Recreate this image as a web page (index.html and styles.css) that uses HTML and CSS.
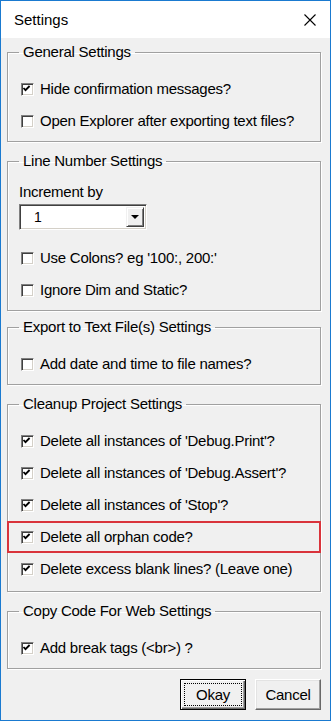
FILE: index.html
```html
<!DOCTYPE html>
<html lang="en">
<head>
  <meta charset="UTF-8">
  <title>Settings</title>
  <link rel="stylesheet" href="styles.css">
</head>
<body>

  <div class="window">
    <div class="titlebar">
      <span class="title">Settings</span>
      <svg class="close" width="12" height="12" viewBox="0 0 12 12">
        <path d="M0.5 0.5 L11.5 11.5 M11.5 0.5 L0.5 11.5" stroke="#000" stroke-width="1.1" fill="none"/>
      </svg>
    </div>

    <div class="content">
      <fieldset class="group">
        <legend>General Settings</legend>
        <div class="check"><span class="box on"></span>Hide confirmation messages?</div>
        <div class="check"><span class="box"></span>Open Explorer after exporting text files?</div>
      </fieldset>

      <fieldset class="group">
        <legend>Line Number Settings</legend>
        <div class="label">Increment by</div>
        <div class="combo">
          <span class="combo-value">1</span>
          <span class="combo-arrow"></span>
        </div>
        <div class="check"><span class="box"></span>Use Colons? eg '100:, 200:'</div>
        <div class="check"><span class="box"></span>Ignore Dim and Static?</div>
      </fieldset>

      <fieldset class="group tight">
        <legend>Export to Text File(s) Settings</legend>
        <div class="check"><span class="box"></span>Add date and time to file names?</div>
      </fieldset>

      <fieldset class="group roomy">
        <legend>Cleanup Project Settings</legend>
        <div class="check"><span class="box on"></span>Delete all instances of 'Debug.Print'?</div>
        <div class="check"><span class="box on"></span>Delete all instances of 'Debug.Assert'?</div>
        <div class="check"><span class="box on"></span>Delete all instances of 'Stop'?</div>
        <div class="check highlight"><span class="box on"></span>Delete all orphan code?</div>
        <div class="check"><span class="box on"></span>Delete excess blank lines? (Leave one)</div>
      </fieldset>

      <fieldset class="group">
        <legend>Copy Code For Web Settings</legend>
        <div class="check"><span class="box on"></span>Add break tags (&lt;br&gt;) ?</div>
      </fieldset>

      <div class="buttons">
        <button class="btn default"><span class="focus">Okay</span></button>
        <button class="btn">Cancel</button>
      </div>
    </div>
  </div>

</body>
</html>
```

FILE: styles.css
```css
html, body {
  margin: 0;
  padding: 0;
}
body {
  font-family: "Liberation Sans", Arial, sans-serif;
  font-size: 15px;
  letter-spacing: -0.25px;
  color: #000;
  background-color: #f0f0f0;
}
.window {
  width: 331px;
  height: 721px;
  box-sizing: border-box;
  border: 1px solid #1a7ad0;
  background-color: #f0f0f0;
}
.titlebar {
  height: 37px;
  background-color: #fff;
  display: flex;
  align-items: center;
  justify-content: space-between;
  padding: 0 14px 0 13px;
}
.title {
  font-size: 15px;
  letter-spacing: 0;
}
.content {
  padding: 5px 9px 0 6px;
}
.group {
  margin: 10px 0 0;
  padding: 12px 0 4px 13px;
  border: 1px solid #a0a0a0;
  box-shadow: 1px 1px 0 #fff, inset 1px 1px 0 #fff;
  min-width: 0;
}
.group:first-child {
  margin-top: 0;
}
.group.tight {
  margin-top: 7px;
}
.group.roomy {
  padding-bottom: 6px;
}
.group legend {
  padding: 0 4px;
  margin-left: -2px;
  line-height: 18px;
}
.check {
  display: flex;
  align-items: center;
  height: 32px;
  line-height: 18px;
}
.box {
  width: 13px;
  height: 13px;
  box-sizing: border-box;
  margin-right: 6px;
  background-color: #fff;
  border: 1px solid;
  border-color: #808080 #fff #fff #808080;
  box-shadow: inset 1px 1px 0 #404040, inset -1px -1px 0 #d4d0c8;
  flex: none;
}
.box.on {
  background-image: url("data:image/svg+xml,%3Csvg xmlns='http://www.w3.org/2000/svg' width='11' height='11' viewBox='0 0 11 11'%3E%3Cpath d='M2.5 5 L4.5 7.2 L8.6 3' stroke='%23000' stroke-width='1.8' fill='none'/%3E%3C/svg%3E");
  background-position: -1px -1px;
  background-repeat: no-repeat;
}
.highlight {
  margin: 0 -1px 0 -14px;
  padding-left: 12px;
  border: 2px solid #d9333b;
  box-sizing: border-box;
}
.label {
  margin: 1px 0 0 -2px;
  line-height: 18px;
}
.combo {
  margin: 3px 0 12px -2px;
  width: 128px;
  height: 26px;
  box-sizing: border-box;
  background-color: #fff;
  border: 1px solid;
  border-color: #808080 #fff #fff #808080;
  box-shadow: inset 1px 1px 0 #404040, inset -1px -1px 0 #d4d0c8;
  display: flex;
  align-items: center;
  justify-content: space-between;
  padding: 2px;
}
.combo-value {
  padding-left: 12px;
  font-size: 14px;
}
.combo-arrow {
  width: 18px;
  height: 20px;
  box-sizing: border-box;
  background-color: #f0f0f0;
  border: 1px solid;
  border-color: #f0f0f0 #404040 #404040 #f0f0f0;
  box-shadow: inset 1px 1px 0 #fff, inset -1px -1px 0 #808080;
  position: relative;
}
.combo-arrow::after {
  content: "";
  position: absolute;
  left: 4px;
  top: 7px;
  border-left: 4px solid transparent;
  border-right: 4px solid transparent;
  border-top: 4px solid #000;
}
.buttons {
  display: flex;
  justify-content: flex-end;
  gap: 9px;
  margin-top: 10px;
}
.btn {
  width: 66px;
  height: 31px;
  box-sizing: border-box;
  font-family: "Liberation Sans", Arial, sans-serif;
  font-size: 15px;
  letter-spacing: -0.25px;
  color: #000;
  background-color: #f0f0f0;
  border: 1px solid;
  border-color: #fff #696969 #696969 #fff;
  box-shadow: inset -1px -1px 0 #a0a0a0, inset 1px 1px 0 #e3e3e3;
  padding: 0;
}
.btn.default {
  border: 1px solid #000;
  box-shadow: inset 1px 1px 0 #fff, inset -1px -1px 0 #696969, inset -2px -2px 0 #a0a0a0;
  padding: 3px;
  display: flex;
}
.focus {
  flex: 1;
  display: flex;
  align-items: center;
  justify-content: center;
  border: 1px dotted #000;
}
```
